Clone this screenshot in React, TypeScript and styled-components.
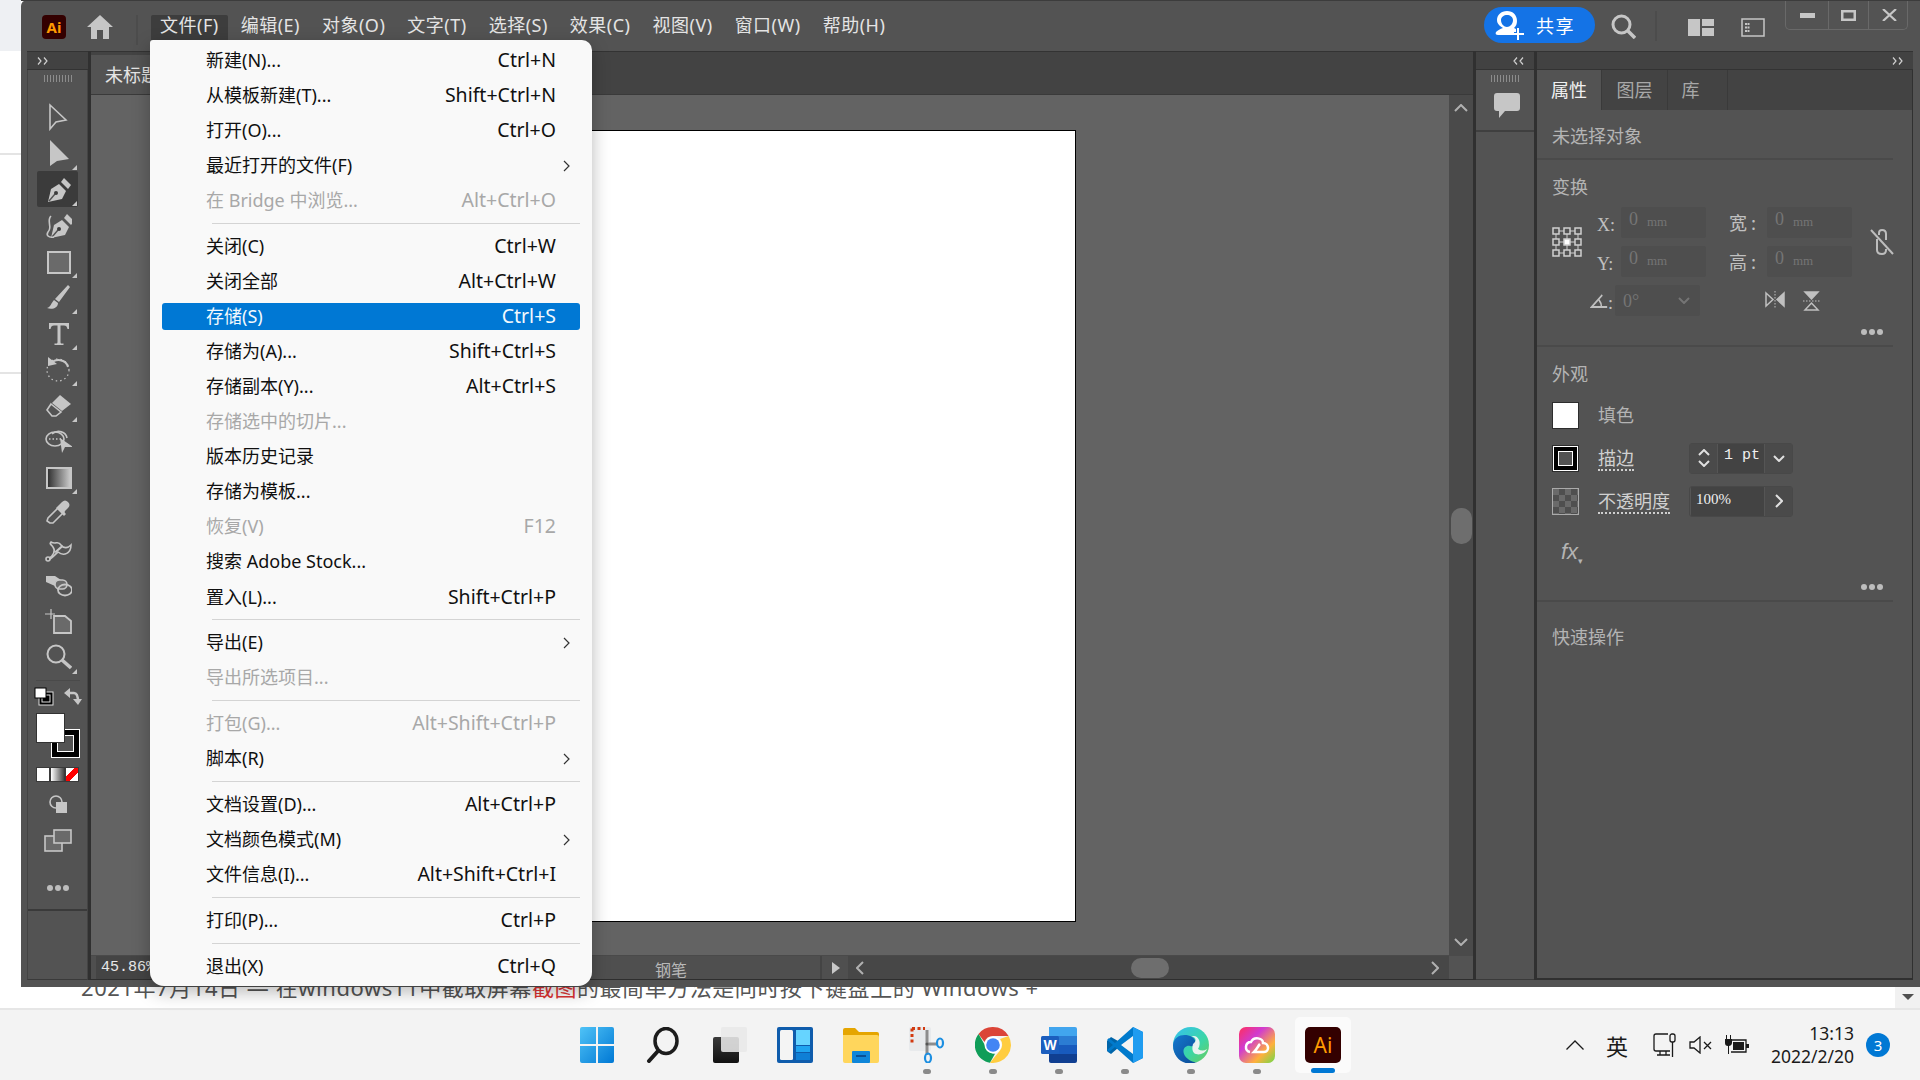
import React from "react";
import styled, { createGlobalStyle } from "styled-components";

const Global = createGlobalStyle`
  html, body { margin: 0; padding: 0; background: #fff; }
  * { box-sizing: border-box; }
`;

const SANS = `"Noto Sans", "Noto Sans CJK SC", sans-serif`;
const CJK = `"Noto Sans CJK SC", "Noto Sans", sans-serif`;
const SERIF = `"Liberation Serif", "Noto Sans CJK SC", serif`;
const ICON = "#c6c6c6";

const Root = styled.div`
  position: relative;
  width: 1920px;
  height: 1080px;
  overflow: hidden;
  display: flex;
  flex-direction: column;
  background: #fff;
  font-family: ${SANS};
`;
const Desktop = styled.div`
  display: flex;
  height: 987px;
`;
const Gutter = styled.div`
  width: 21px;
  display: flex;
  flex-direction: column;
  background: #fff;
`;
const GutterHead = styled.div`
  height: 51px;
  background: #eef0f3;
`;
const GutterRule = styled.div<{ $gap: number }>`
  height: 2px;
  margin-top: ${(p) => p.$gap}px;
  background: #e4e4e4;
`;
const Win = styled.div`
  flex: 1;
  display: flex;
  flex-direction: column;
  background: #535353;
  border-top-left-radius: 6px;
`;
const TitleBar = styled.div`
  height: 51px;
  flex: none;
  display: flex;
  align-items: flex-start;
  padding: 14px 0 0 21px;
  border-top: 1px solid #3c3c3c;
  position: relative;
`;
const Logo = styled.div`
  width: 24px;
  height: 24px;
  border-radius: 4px;
  background: #330000;
  color: #ff9a00;
  font: 700 15px/24px ${SANS};
  text-align: center;
`;
const HomeBtn = styled.div`
  margin-left: 21px;
  width: 26px;
  height: 24px;
`;
const VRule = styled.div<{ $ml: number; $h?: number; $mt?: number }>`
  width: 2px;
  height: ${(p) => p.$h ?? 30}px;
  margin-left: ${(p) => p.$ml}px;
  margin-top: ${(p) => p.$mt ?? 0}px;
  background: #4c4c4c;
`;
const MenuBar = styled.div`
  margin-left: 13px;
  display: flex;
  gap: 4px;
`;
const MenuHead = styled.div<{ $active?: boolean }>`
  height: 25px;
  padding: 0 9px;
  font: 18px/21px ${SANS};
  letter-spacing: 0.5px;
  color: #e4e4e4;
  white-space: nowrap;
  background: ${(p) => (p.$active ? "#3d3d3d" : "transparent")};
  border-radius: 2px 2px 0 0;
`;
const TitleRight = styled.div`
  margin-left: auto;
  display: flex;
  align-items: flex-start;
  margin-top: -14px;
`;
const Share = styled.div`
  margin-top: 6px;
  width: 111px;
  height: 36px;
  border-radius: 18px;
  background: #1473e6;
  color: #fff;
  display: flex;
  align-items: center;
  padding-left: 11px;
  gap: 11px;
  font: 18px/36px ${CJK};
  letter-spacing: 1.5px;
`;
const TopIcon = styled.div<{ $ml: number; $mt: number }>`
  margin-left: ${(p) => p.$ml}px;
  margin-top: ${(p) => p.$mt}px;
  line-height: 0;
`;
const WinControls = styled.div`
  margin-left: 20px;
  margin-right: 12px;
  width: 123px;
  height: 29px;
  display: grid;
  grid-template-columns: 42px 40px 41px;
  border: 1px solid #696969;
  border-top: none;
  border-radius: 0 0 5px 5px;
`;
const WinBtn = styled.div`
  display: flex;
  align-items: center;
  justify-content: center;
  border-left: 1px solid #696969;
  &:first-child { border-left: none; }
`;
const Workspace = styled.div`
  flex: 1;
  min-height: 0;
  display: flex;
  padding: 0 7px 7px 6px;
`;
const ToolCol = styled.div`
  width: 61px;
  flex: none;
  display: flex;
  flex-direction: column;
`;
const Strip = styled.div<{ $align?: string }>`
  height: 19px;
  flex: none;
  background: #424242;
  border-top: 1px solid #333;
  border-bottom: 1px solid #333;
  display: flex;
  align-items: center;
  justify-content: ${(p) => p.$align ?? "flex-start"};
  padding: 0 10px;
  color: #d0d0d0;
  line-height: 0;
`;
const ToolPanel = styled.div`
  flex: 1;
  display: flex;
  flex-direction: column;
  align-items: center;
  border-left: 1px solid #444;
  border-right: 1px solid #444;
  border-bottom: 1px solid #3a3a3a;
`;
const Gripper = styled.div`
  width: 28px;
  height: 7px;
  margin-top: 5px;
  flex: none;
  background: repeating-linear-gradient(90deg, #8c8c8c 0 1px, transparent 1px 3px);
`;
const Tools = styled.div`
  margin-top: 17px;
  display: flex;
  flex-direction: column;
  align-items: center;
`;
const ToolSlot = styled.div<{ $active?: boolean; $corner?: boolean; $mt?: number }>`
  position: relative;
  width: 41px;
  height: 36px;
  flex: none;
  margin-top: ${(p) => p.$mt ?? 0}px;
  display: flex;
  align-items: center;
  justify-content: center;
  border-radius: 2px;
  background: ${(p) => (p.$active ? "#3b3b3b" : "transparent")};
  &::after {
    content: "";
    display: ${(p) => (p.$corner ? "block" : "none")};
    position: absolute;
    right: 1px;
    bottom: 1px;
    border-left: 5px solid transparent;
    border-bottom: 5px solid ${ICON};
  }
`;
const ToolRule = styled.div`
  width: 44px;
  height: 1px;
  background: #4a4a4a;
  margin-top: 5px;
`;
const SwapRow = styled.div`
  width: 48px;
  margin-top: 6px;
  display: flex;
  justify-content: space-between;
  line-height: 0;
`;
const ColorStack = styled.div`
  position: relative;
  width: 44px;
  height: 45px;
  margin-top: 7px;
`;
const FillSwatch = styled.div`
  position: absolute;
  left: 0;
  top: 0;
  width: 29px;
  height: 30px;
  background: #fff;
  border: 1px solid #333;
  z-index: 1;
`;
const StrokeSwatch = styled.div`
  position: absolute;
  right: 0;
  bottom: 0;
  width: 29px;
  height: 29px;
  background: #000;
  border: 1px solid #fff;
  display: flex;
  align-items: center;
  justify-content: center;
  &::after {
    content: "";
    width: 15px;
    height: 15px;
    border: 1px solid #fff;
    background: #535353;
  }
`;
const ModeRow = styled.div`
  margin-top: 9px;
  width: 43px;
  height: 15px;
  display: grid;
  grid-template-columns: repeat(3, 1fr);
  gap: 2px;
  padding: 1px;
  background: #3a3a3a;
`;
const Mode = styled.div<{ $kind: "fill" | "grad" | "none" }>`
  background: ${(p) =>
    p.$kind === "fill"
      ? "#fff"
      : p.$kind === "grad"
      ? "linear-gradient(90deg,#fff,#444)"
      : "linear-gradient(135deg,#fff 0 35%,#f00 35% 65%,#fff 65%)"};
`;
const ToolFoot = styled.div`
  margin-top: auto;
  width: 100%;
  height: 70px;
  border-top: 2px solid #3a3a3a;
`;
const DocArea = styled.div`
  flex: 1;
  min-width: 0;
  display: flex;
  flex-direction: column;
  border-left: 3px solid #303030;
  border-right: 3px solid #303030;
  border-bottom: 1px solid #2e2e2e;
`;
const TabBar = styled.div`
  height: 44px;
  flex: none;
  background: #434343;
  border-top: 1px solid #333;
  border-bottom: 1px solid #3a3a3a;
  display: flex;
`;
const DocTab = styled.div`
  width: 230px;
  margin-top: 3px;
  padding-left: 14px;
  background: #535353;
  color: #e4e4e4;
  font: 18px/38px ${CJK};
`;
const CanvasRow = styled.div`
  flex: 1;
  min-height: 0;
  display: flex;
`;
const Canvas = styled.div`
  flex: 1;
  background: #636363;
  padding: 35px 0 0 425px;
`;
const Artboard = styled.div`
  width: 560px;
  height: 792px;
  background: #fff;
  border: 1px solid #000;
`;
const VScroll = styled.div`
  width: 24px;
  flex: none;
  background: #4a4a4a;
  display: flex;
  flex-direction: column;
  align-items: center;
  justify-content: space-between;
  padding: 9px 0;
  color: #aaa;
`;
const VThumb = styled.div`
  width: 21px;
  height: 36px;
  border-radius: 10px;
  background: #6e6e6e;
  margin-top: 2px;
`;
const StatusRow = styled.div`
  height: 24px;
  flex: none;
  display: flex;
  background: #4f4f4f;
  border-top: 1px solid #4a4a4a;
`;
const ZoomField = styled.div`
  margin-left: 5px;
  width: 120px;
  padding-left: 5px;
  background: #444;
  color: #e8e8e8;
  font: 15px/24px "Liberation Mono", monospace;
  white-space: nowrap;
`;
const ToolName = styled.div`
  margin-left: 439px;
  width: 165px;
  color: #b8b8b8;
  font: 16px/26px ${CJK};
`;
const StatusArrow = styled.div`
  width: 28px;
  border-left: 2px solid #444;
  display: flex;
  align-items: center;
  justify-content: center;
  line-height: 0;
  padding-left: 2px;
`;
const HScroll = styled.div`
  flex: 1;
  display: flex;
  align-items: center;
  padding: 0 10px 0 8px;
  background: #474747;
  color: #aaa;
  line-height: 0;
`;
const HThumb = styled.div`
  width: 38px;
  height: 20px;
  border-radius: 10px;
  background: #6e6e6e;
  margin-left: 267px;
  margin-right: auto;
`;
const ScrollCorner = styled.div`
  width: 24px;
  flex: none;
  background: #535353;
`;
const CommentCol = styled.div`
  width: 58px;
  flex: none;
  display: flex;
  flex-direction: column;
  border-bottom: 1px solid #3a3a3a;
`;
const CommentBox = styled.div`
  height: 62px;
  flex: none;
  display: flex;
  flex-direction: column;
  align-items: center;
  border-bottom: 2px solid #3f3f3f;
`;
const BubbleWrap = styled.div`
  margin: 11px 0 0 3px;
  line-height: 0;
`;
const PropsCol = styled.div`
  width: 379px;
  flex: none;
  display: flex;
  flex-direction: column;
  border-left: 3px solid #303030;
`;
const PropsBody = styled.div`
  flex: 1;
  display: flex;
  flex-direction: column;
  border-right: 1px solid #303030;
  border-bottom: 2px solid #303030;
  color: #b4b4b4;
  font: 18px/24px ${CJK};
`;
const PropTabs = styled.div`
  height: 40px;
  flex: none;
  display: flex;
  background: #434343;
`;
const PropTab = styled.div<{ $active?: boolean; $w: number; $pr?: number }>`
  width: ${(p) => p.$w}px;
  padding-right: ${(p) => p.$pr ?? 0}px;
  text-align: center;
  font: 18px/38px ${CJK};
  color: ${(p) => (p.$active ? "#f0f0f0" : "#a8a8a8")};
  background: ${(p) => (p.$active ? "#535353" : "transparent")};
  border-right: 1px solid #3a3a3a;
`;
const NoSel = styled.div<{ $quick?: boolean }>`
  height: 50px;
  flex: none;
  margin-right: 19px;
  padding: ${(p) => (p.$quick ? 22 : 13)}px 0 0 15px;
  border-bottom: ${(p) => (p.$quick ? "none" : "2px solid #4a4a4a")};
`;
const Section = styled.div<{ $h: number }>`
  height: ${(p) => p.$h}px;
  flex: none;
  margin-right: 19px;
  padding: 14px 0 0 15px;
  border-bottom: 2px solid #4a4a4a;
`;
const TransformGrid = styled.div`
  margin-top: 9px;
  display: grid;
  grid-template-columns: 45px 24px 85px 23px 38px 85px 18px 24px;
  grid-auto-rows: 31px;
  row-gap: 8px;
  align-items: center;
`;
const RefCell = styled.div`
  grid-column: 1;
  grid-row: 1 / span 2;
  line-height: 0;
`;
const FieldLabel = styled.div<{ $serif?: boolean; $c?: number; $r?: number }>`
  ${(p) => (p.$c ? `grid-column: ${p.$c}; grid-row: ${p.$r};` : "")}
  font: 18px/31px ${(p) => (p.$serif ? SERIF : CJK)};
  padding-top: ${(p) => (p.$serif ? 3 : 0)}px;
  height: 31px;
  color: #c0c0c0;
  white-space: nowrap;
`;
const MutedField = styled.div<{ $w?: number; $c?: number; $r?: number }>`
  ${(p) => (p.$c ? `grid-column: ${p.$c}; grid-row: ${p.$r};` : "")}
  width: ${(p) => p.$w ?? 85}px;
  height: 31px;
  border-radius: 2px;
  background: #4e4e4e;
  color: #757575;
  font: 18px/24px ${SERIF};
  padding-left: 8px;
  display: flex;
  gap: 9px;
  span { font-size: 13px; line-height: 29px; }
`;
const LinkCell = styled.div`
  grid-column: 8;
  grid-row: 1 / span 2;
  line-height: 0;
`;
const AngleRow = styled.div`
  grid-column: 1 / -1;
  grid-row: 3;
  display: flex;
  align-items: center;
  padding-left: 38px;
`;
const AngleField = styled(MutedField)`
  margin-left: 2px;
  position: relative;
  justify-content: space-between;
  padding-right: 10px;
  align-items: center;
`;
const FlipIcons = styled.div`
  margin-left: 65px;
  display: flex;
  gap: 18px;
  line-height: 0;
`;
const DotsRow = styled.div<{ $mt: number; $center?: boolean }>`
  margin-top: ${(p) => p.$mt}px;
  display: flex;
  justify-content: ${(p) => (p.$center ? "center" : "flex-end")};
  padding-right: ${(p) => (p.$center ? 0 : 10)}px;
  gap: 2px;
`;
const Dot = styled.i`
  display: block;
  width: 6px;
  height: 6px;
  border-radius: 50%;
  background: #bdbdbd;
`;
const ApRow = styled.div<{ $mt?: number }>`
  height: 36px;
  margin-top: ${(p) => p.$mt ?? 7}px;
  display: grid;
  grid-template-columns: 27px 110px auto;
  column-gap: 0;
  align-items: center;
`;
const ApSwatch = styled.div<{ $kind: "fill" | "stroke" | "opacity" }>`
  width: 27px;
  height: 27px;
  border: 1px solid ${(p) => (p.$kind === "opacity" ? "#aaa" : "#2d2d2d")};
  background: ${(p) =>
    p.$kind === "fill"
      ? "#fff"
      : p.$kind === "stroke"
      ? "#000"
      : "repeating-conic-gradient(#4f4f4f 0 25%, #6a6a6a 0 50%) 0 0 / 12px 12px"};
  display: flex;
  align-items: center;
  justify-content: center;
  ${(p) => (p.$kind === "stroke" ? "outline: 1px solid #fff; outline-offset: -2px;" : "")}
  &::after {
    content: "";
    display: ${(p) => (p.$kind === "stroke" ? "block" : "none")};
    width: 13px;
    height: 13px;
    border: 1px solid #fff;
    background: #535353;
  }
`;
const ApLabel = styled.div<{ $link?: boolean }>`
  margin-left: 19px;
  width: fit-content;
  height: 26px;
  color: ${(p) => (p.$link ? "#d0d0d0" : "#b4b4b4")};
  border-bottom: ${(p) => (p.$link ? "2px dotted #cfcfcf" : "none")};
`;
const ValueBox = styled.div`
  width: 104px;
  height: 31px;
  display: flex;
  border: 1px solid #484848;
  border-radius: 3px;
  overflow: hidden;
`;
const BoxBtn = styled.div<{ $w: number }>`
  width: ${(p) => p.$w}px;
  flex: none;
  display: flex;
  flex-direction: column;
  align-items: center;
  justify-content: center;
  gap: 4px;
  line-height: 0;
  background: #4a4a4a;
`;
const BoxValue = styled.div<{ $mono?: boolean }>`
  flex: 1;
  background: #434343;
  color: #f0f0f0;
  padding-left: ${(p) => (p.$mono ? 6 : 5)}px;
  font: 15px/24px ${(p) => (p.$mono ? `"Liberation Mono", monospace` : SERIF)};
  border-left: 1px solid #555;
  border-right: 1px solid #555;
  white-space: pre;
`;
const FxRow = styled.div`
  margin: 18px 0 0 9px;
  height: 30px;
  color: #b4b4b4;
  font: italic 22px/30px "Liberation Sans", sans-serif;
  sub { font-size: 9px; font-style: normal; }
`;
const BelowRow = styled.div`
  height: 21px;
  flex: none;
  display: flex;
  overflow: hidden;
`;
const Article = styled.div`
  margin: -12px 0 0 81px;
  height: 24px;
  flex: 1;
  font: 22px/24px ${SANS};
  letter-spacing: 0.55px;
  color: #555;
  white-space: nowrap;
  em { color: #dd3333; font-style: normal; }
`;
const PageScroll = styled.div`
  width: 25px;
  flex: none;
  background: #f1f1f1;
  display: flex;
  justify-content: center;
  padding-top: 7px;
  &::after {
    content: "";
    width: 0;
    height: 0;
    border-left: 6px solid transparent;
    border-right: 6px solid transparent;
    border-top: 6px solid #505050;
  }
`;
const Taskbar = styled.div`
  height: 72px;
  flex: none;
  background: #f3f3f3;
  border-top: 2px solid #e6e6e6;
  display: flex;
  padding-left: 564px;
  position: relative;
`;
const TaskCell = styled.div<{ $active?: boolean }>`
  position: relative;
  width: 66px;
  height: 70px;
  flex: none;
  display: flex;
  justify-content: center;
  padding-top: 17px;
  line-height: 0;
  &::before {
    content: "";
    display: ${(p) => (p.$active ? "block" : "none")};
    position: absolute;
    left: 5px;
    right: 5px;
    top: 7px;
    bottom: 7px;
    background: #fbfbfb;
    border-radius: 5px;
  }
  svg { position: relative; }
`;
const RunDot = styled.i<{ $active?: boolean }>`
  position: absolute;
  left: 50%;
  transform: translateX(-50%);
  bottom: ${(p) => (p.$active ? 7 : 6)}px;
  width: ${(p) => (p.$active ? 24 : 8)}px;
  height: 5px;
  border-radius: 3px;
  background: ${(p) => (p.$active ? "#0078d4" : "#8a8a8a")};
`;
const Tray = styled.div`
  margin-left: auto;
  padding-right: 30px;
  display: flex;
  align-items: center;
  color: #1a1a1a;
  height: 70px;
`;
const TrayIcon = styled.div<{ $ml: number }>`
  margin-left: ${(p) => p.$ml}px;
  line-height: 0;
`;
const Lang = styled.div`
  margin-left: 22px;
  font: 22px/1 ${CJK};
`;
const Clock = styled.div`
  width: 105px;
  text-align: right;
  font: 17.5px/23px "Noto Sans", sans-serif;
`;
const Badge = styled.div`
  margin-left: 12px;
  width: 24px;
  height: 24px;
  border-radius: 50%;
  background: #0078d4;
  color: #fff;
  text-align: center;
  font: 15px/24px "Noto Sans", sans-serif;
`;
const Menu = styled.div`
  position: absolute;
  left: 150px;
  top: 40px;
  width: 442px;
  height: 946px;
  padding-top: 2.5px;
  background: #f9f9f9;
  border-radius: 3px 10px 14px 14px;
  box-shadow: 0 6px 18px rgba(0, 0, 0, 0.28);
  z-index: 5;
`;
const Row = styled.div<{ $sel?: boolean; $off?: boolean }>`
  height: 35.05px;
  position: relative;
  display: flex;
  align-items: center;
  justify-content: space-between;
  padding: 0 36px 0 56px;
  font: 18px/26px ${SANS};
  white-space: nowrap;
  color: ${(p) => (p.$sel ? "#f2f8fd" : p.$off ? "#a8a8a8" : "#101010")};
  &::before {
    content: "";
    display: ${(p) => (p.$sel ? "block" : "none")};
    position: absolute;
    left: 12px;
    right: 12px;
    top: 4px;
    bottom: 4px;
    background: #0078d4;
    border-radius: 3px;
  }
  span { position: relative; }
`;
const Shortcut = styled.span`
  font-size: 19.5px;
`;
const RowArrow = styled.svg`
  position: absolute;
  right: 22px;
  top: 12px;
`;
const Sep = styled.div`
  height: 10.8px;
  display: flex;
  align-items: center;
  padding: 0 12px 0 62px;
  &::after {
    content: "";
    flex: 1;
    height: 1px;
    background: #d4d4d4;
  }
`;

type Item = { l: string; s?: string; off?: boolean; sel?: boolean; arrow?: boolean } | "sep";
const ITEMS: Item[] = [
  { l: "新建(N)...", s: "Ctrl+N" },
  { l: "从模板新建(T)...", s: "Shift+Ctrl+N" },
  { l: "打开(O)...", s: "Ctrl+O" },
  { l: "最近打开的文件(F)", arrow: true },
  { l: "在 Bridge 中浏览...", s: "Alt+Ctrl+O", off: true },
  "sep",
  { l: "关闭(C)", s: "Ctrl+W" },
  { l: "关闭全部", s: "Alt+Ctrl+W" },
  { l: "存储(S)", s: "Ctrl+S", sel: true },
  { l: "存储为(A)...", s: "Shift+Ctrl+S" },
  { l: "存储副本(Y)...", s: "Alt+Ctrl+S" },
  { l: "存储选中的切片...", off: true },
  { l: "版本历史记录" },
  { l: "存储为模板..." },
  { l: "恢复(V)", s: "F12", off: true },
  { l: "搜索 Adobe Stock..." },
  { l: "置入(L)...", s: "Shift+Ctrl+P" },
  "sep",
  { l: "导出(E)", arrow: true },
  { l: "导出所选项目...", off: true },
  "sep",
  { l: "打包(G)...", s: "Alt+Shift+Ctrl+P", off: true },
  { l: "脚本(R)", arrow: true },
  "sep",
  { l: "文档设置(D)...", s: "Alt+Ctrl+P" },
  { l: "文档颜色模式(M)", arrow: true },
  { l: "文件信息(I)...", s: "Alt+Shift+Ctrl+I" },
  "sep",
  { l: "打印(P)...", s: "Ctrl+P" },
  "sep",
  { l: "退出(X)", s: "Ctrl+Q" },
];
const HEADS = ["文件(F)", "编辑(E)", "对象(O)", "文字(T)", "选择(S)", "效果(C)", "视图(V)", "窗口(W)", "帮助(H)"];

const Ic = ({ s = 28, h, children, vb }: { s?: number; h?: number; vb?: string; children: React.ReactNode }) => (
  <svg width={s} height={h ?? s} viewBox={vb ?? `0 0 ${s} ${h ?? s}`} fill="none" stroke={ICON} strokeWidth="1.6">
    {children}
  </svg>
);
const PenNib = () => (
  <g>
    <path fill={ICON} stroke="none" d="M15 9 22 16 18 24 4 27 7 14Z" />
    <path stroke="#535353" strokeWidth="1.4" d="M5 26 11 19" />
    <circle cx="12" cy="18" r="2" fill="#3b3b3b" stroke="none" />
    <path fill={ICON} stroke="none" d="M17 7 20 3 27 10 24 14Z" />
  </g>
);
const Collapse = ({ left }: { left?: boolean }) => (
  <svg width="11" height="8" viewBox="0 0 11 8" fill="none" stroke="#d0d0d0" strokeWidth="1.2">
    <path d={left ? "M4 0.500 1 4 4 7.500M10 0.500 7 4 10 7.500" : "M1 0.500 4 4 1 7.500M7 0.500 10 4 7 7.500"} />
  </svg>
);
const TOOLS: { node: React.ReactNode; corner?: boolean; active?: boolean }[] = [
  { node: <Ic><path d="M6 2V26L12 19 22 17Z" /></Ic> },
  { node: <Ic><path fill={ICON} stroke="none" d="M6 1V27L13 22 25 20Z" /></Ic>, corner: true },
  { node: <Ic><PenNib /></Ic>, corner: true, active: true },
  { node: <Ic><g transform="translate(3 0)"><PenNib /></g><path d="M7 5C2 10 9 16 4 21 2 24 4 27 10 26" /></Ic> },
  { node: <Ic><rect x="4" y="5" width="22" height="21" fill="#6a6a6a" strokeWidth="2" /></Ic>, corner: true },
  { node: <Ic><path fill={ICON} stroke="none" d="M24 2 26 4 15 19 11 16ZM10 17 14 20C14 25 8 27 3 25 7 24 7 20 10 17Z" /></Ic>, corner: true },
  { node: <Ic><path fill={ICON} stroke="none" d="M5 4H25V10H23.500C23 7.500 22 6.500 20 6.500H16.500V23C16.500 24 17 24.500 18 24.500H19.500V26H10.500V24.500H12C13 24.500 13.500 24 13.500 23V6.500H10C8 6.500 7 7.500 6.500 10H5Z" /></Ic>, corner: true },
  { node: <Ic><path d="M7 9C11 3 22 4 24 12" strokeWidth="2" /><path fill={ICON} stroke="none" d="M4 2 13 9 4 11Z" /><circle cx="14" cy="15" r="11" strokeDasharray="1.500 3" strokeWidth="1.200" /></Ic>, corner: true },
  { node: <Ic><path fill={ICON} stroke="none" d="M16 4 27 13 18 20 8 12Z" /><path d="M7 13 17 21 12 25 8 25 3 19Z" strokeWidth="1.600" /></Ic>, corner: true },
  { node: <Ic><ellipse cx="11" cy="12" rx="9" ry="7" /><path strokeDasharray="1.500 2" d="M5 12H18" /><path fill={ICON} stroke="none" d="M16 11 29 20H21L18 26Z" /><path d="M8 7C14 2 22 5 23 11" /></Ic> },
  { node: <Ic><rect x="3" y="5" width="24" height="20" fill="url(#g1)" strokeWidth="2" /></Ic>, corner: true },
  { node: <Ic><path d="M6 24 3 22 4 19 15 8 20 13 9 24Z" /><path fill={ICON} stroke="none" d="M14 7 18 3C20 1 22 1 24 3 26 5 26 7 24 9L20 13 22 15 20 17 12 9Z" /></Ic> },
  { node: <Ic><circle cx="4" cy="24" r="2" /><path d="M5 23C9 21 12 16 9 12 7 9 5 9 7 7 12 10 14 5 17 10 20 14 24 13 27 10 27 18 20 22 14 17 10 20 8 24 5 24" /><path fill={ICON} stroke="none" d="M10 17 18 10 19 12 12 18Z" /></Ic> },
  { node: <Ic><path fill={ICON} stroke="none" d="M2 5H11L17 9C13 10 11 12 11 15L2 11Z" /><rect x="11" y="9" width="12" height="9" rx="4.500" fill="#6a6a6a" /><ellipse cx="21" cy="19" rx="7" ry="5.500" strokeWidth="1.800" /></Ic> },
  { node: <Ic><path d="M7 2V12M1 7H11" strokeWidth="1.200" /><path fill="#6a6a6a" strokeWidth="1.800" d="M10 9H21L27 14V26H10Z" /></Ic> },
  { node: <Ic><circle cx="12" cy="11" r="8.500" strokeWidth="2" /><path d="M18 17 27 25" strokeWidth="3.500" /></Ic>, corner: true },
];

const Chev = ({ d, w = 14, h = 8, stroke = "#b0b0b0", sw = 2 }: { d: string; w?: number; h?: number; stroke?: string; sw?: number }) => (
  <svg width={w} height={h} viewBox={`0 0 ${w} ${h}`} fill="none" stroke={stroke} strokeWidth={sw}>
    <path d={d} />
  </svg>
);

const TaskIcons: React.ReactNode[] = [
  <svg width="36" height="36" viewBox="0 0 36 36" key="w">
    <defs>
      <linearGradient id="wg" x1="0" y1="0" x2="1" y2="1"><stop offset="0" stopColor="#4fc3f7" /><stop offset="1" stopColor="#0078d4" /></linearGradient>
    </defs>
    <path fill="url(#wg)" d="M1 2a2 2 0 0 1 2-2H17V17H1ZM19 0H33a2 2 0 0 1 2 2V17H19ZM1 19H17V36H3a2 2 0 0 1-2-2ZM19 19H35V34a2 2 0 0 1-2 2H19Z" />
  </svg>,
  <svg width="36" height="36" viewBox="0 0 36 36" fill="none" stroke="#1c1c1c" key="s">
    <ellipse cx="21" cy="14" rx="11" ry="12.500" strokeWidth="3.500" />
    <path d="M13 24 4 34" strokeWidth="4" strokeLinecap="round" />
  </svg>,
  <svg width="36" height="36" viewBox="0 0 36 36" key="t">
    <defs>
      <linearGradient id="tg" x1="0" y1="0" x2="0" y2="1"><stop offset="0" stopColor="#3a3a3a" /><stop offset="1" stopColor="#111" /></linearGradient>
    </defs>
    <rect x="2" y="10" width="26" height="26" rx="2" fill="url(#tg)" />
    <rect x="10" y="0" width="26" height="25" rx="2" fill="#e8e8e8" opacity=".88" />
  </svg>,
  <svg width="36" height="36" viewBox="0 0 36 36" key="d">
    <rect width="36" height="36" rx="2" fill="#0f5cac" />
    <rect x="3" y="3" width="13" height="30" rx="1.500" fill="#f4f4f4" />
    <rect x="19" y="3" width="14" height="15" fill="#66d4ff" />
    <rect x="19" y="19" width="14" height="6" fill="#1fa4f0" />
    <rect x="19" y="26" width="14" height="7" fill="#0f7fd6" />
  </svg>,
  <svg width="36" height="36" viewBox="0 0 36 36" key="f">
    <path fill="#e5a500" d="M0 3a2 2 0 0 1 2-2H12L16 5H34a2 2 0 0 1 2 2V12H0Z" />
    <path fill="#ffd65c" d="M0 8H34a2 2 0 0 1 2 2V34a2 2 0 0 1-2 2H2a2 2 0 0 1-2-2Z" />
    <rect x="9" y="24" width="18" height="12" rx="1" fill="#0f86d9" />
    <rect x="13" y="28" width="10" height="2" fill="#0a4f94" />
  </svg>,
  <svg width="36" height="36" viewBox="0 0 36 36" fill="none" key="c">
    <rect x="0" y="0" width="22" height="24" rx="2" fill="#e8eaec" />
    <path stroke="#d23a10" strokeWidth="3" strokeDasharray="3 2.500" d="M3 1.500H16M3 1.500V17" />
    <path stroke="#8d8d8d" strokeWidth="3" d="M18 3V28M18 17H28" />
    <circle cx="18" cy="17" r="1.500" fill="#555" />
    <ellipse cx="31" cy="16" rx="3" ry="4.500" stroke="#1d8fe1" strokeWidth="2.200" />
    <ellipse cx="19" cy="31" rx="3" ry="4.500" stroke="#1d8fe1" strokeWidth="2.200" />
  </svg>,
  <svg width="36" height="36" viewBox="0 0 36 36" key="g">
    <path fill="#db4437" d="M18 0A18 18 0 0 1 33.600 9H18A9 9 0 0 0 9.500 15L3.500 7A18 18 0 0 1 18 0Z" />
    <path fill="#0f9d58" d="M3.500 7 11 20A9 9 0 0 0 20 26.800L15 35.700A18 18 0 0 1 3.500 7Z" />
    <path fill="#ffcd40" d="M33.600 9A18 18 0 0 1 15 35.700L24.800 23.800A9 9 0 0 0 25 12Z" />
    <circle cx="18" cy="18" r="8.500" fill="#fff" />
    <circle cx="18" cy="18" r="6.800" fill="#4285f4" />
  </svg>,
  <svg width="36" height="36" viewBox="0 0 36 36" key="wd">
    <path fill="#41a5ee" d="M8 0H34a2 2 0 0 1 2 2V9H8Z" />
    <rect x="8" y="9" width="28" height="9" fill="#2b7cd3" />
    <rect x="8" y="18" width="28" height="9" fill="#185abd" />
    <path fill="#103f91" d="M8 27H36V34a2 2 0 0 1-2 2H10a2 2 0 0 1-2-2Z" />
    <rect x="0" y="9" width="18" height="18" rx="1.500" fill="#1b5ebe" />
    <text x="9" y="23" textAnchor="middle" fill="#fff" fontSize="14" fontWeight="700" fontFamily="Liberation Sans, sans-serif">W</text>
  </svg>,
  <svg width="36" height="36" viewBox="0 0 36 36" key="v">
    <path fill="#0065a9" d="M1 13 4 10 11 14 9 19 1 25 0 24V14Z M9 16 11 21 4 27 1 25Z" />
    <path fill="#007acc" d="M26 0 36 5V31L26 36 8 20 2 25 0 23 6 18 0 13 2 11 8 16Z M26 9 14 18 26 27Z" />
    <path fill="#1f9cf0" d="M26 0 36 5V31L26 36Z" />
  </svg>,
  <svg width="36" height="36" viewBox="0 0 36 36" key="e">
    <defs>
      <linearGradient id="eg1" x1="0" y1="0" x2="1" y2="1"><stop offset="0" stopColor="#35c1f1" /><stop offset=".6" stopColor="#3bd6a5" /><stop offset="1" stopColor="#6ecb5a" /></linearGradient>
      <linearGradient id="eg2" x1="0" y1="0" x2="1" y2="1"><stop offset="0" stopColor="#1479cf" /><stop offset="1" stopColor="#0c4a94" /></linearGradient>
    </defs>
    <circle cx="18" cy="18" r="18" fill="url(#eg1)" />
    <path fill="url(#eg2)" d="M0 18C1 8 12 6 19 10 25 14 23 21 17 19 13 18 9 22 11 27 13 32 20 36 24 35 12 40 0 32 0 18Z" />
    <path fill="#f3f3f3" d="M20 17C25 14 22 9 18 10 23 6 30 14 25 22 28 24 31 24 34 22 32 27 25 29 21 26 19 24 19 20 20 17Z" opacity=".95" />
  </svg>,
  <svg width="36" height="36" viewBox="0 0 36 36" fill="none" key="cc">
    <defs>
      <linearGradient id="ccg" x1="0" y1="0" x2="1" y2="1"><stop offset="0" stopColor="#ff2f5e" /><stop offset=".35" stopColor="#d03bd0" /><stop offset=".7" stopColor="#ffb03c" /><stop offset="1" stopColor="#6ed94a" /></linearGradient>
    </defs>
    <rect width="36" height="36" rx="7" fill="url(#ccg)" />
    <path stroke="#fff" strokeWidth="2.500" d="M11 25C5 24 6 15 12 15 15 9 24 11 24 16 30 16 31 25 25 25H15C18 22 19 19 21 17" />
  </svg>,
  <svg width="36" height="36" viewBox="0 0 36 36" key="ai">
    <rect width="36" height="36" rx="5" fill="#330000" />
    <text x="18" y="26" textAnchor="middle" fill="#ff9a00" fontSize="21" fontFamily="Noto Sans, sans-serif">Ai</text>
  </svg>,
];

export default function App() {
  return (
    <Root>
      <Global />
      <svg width="0" height="0" style={{ position: "absolute" }}>
        <defs>
          <linearGradient id="g1"><stop offset="0" stopColor="#2c2c2c" /><stop offset="1" stopColor="#cfcfcf" /></linearGradient>
        </defs>
      </svg>
      <Desktop>
        <Gutter>
          <GutterHead />
          <GutterRule $gap={102} />
          <GutterRule $gap={217} />
        </Gutter>
        <Win>
          <TitleBar>
            <Logo>Ai</Logo>
            <HomeBtn>
              <svg width="26" height="24" viewBox="0 0 26 24" fill={ICON}>
                <path d="M13 0 26 12H22V24H16V15H10V24H4V12H0Z" />
              </svg>
            </HomeBtn>
            <VRule $ml={23} />
            <MenuBar>
              {HEADS.map((h, i) => (
                <MenuHead key={h} $active={i === 0}>{h}</MenuHead>
              ))}
            </MenuBar>
            <TitleRight>
              <Share>
                <svg width="30" height="30" viewBox="0 0 30 30" fill="none">
                  <path fill="#fff" fillRule="evenodd" d="M12 1C18 1 22 5 22 11 22 14 21 16 19 18L21 19V22H19V25H3C1 25 0 24 1 22 3 20 5 19 8 18 5 16 2 14 2 10 2 5 6 1 12 1ZM12 5C9 5 6 7 6 10 6 14 9 17 12 17 15 17 18 14 18 10 18 7 15 5 12 5Z" />
                  <path stroke="#fff" strokeWidth="2" d="M23 18V30M17 24H29" />
                </svg>
                共享
              </Share>
              <TopIcon $ml={16} $mt={13}>
                <svg width="25" height="25" viewBox="0 0 25 25" fill="none" stroke={ICON}>
                  <circle cx="10.500" cy="10.500" r="8.500" strokeWidth="3" />
                  <path d="M16.500 16.500 24 24" strokeWidth="3.500" />
                </svg>
              </TopIcon>
              <VRule $ml={19} $h={30} $mt={10} />
              <TopIcon $ml={31} $mt={18}>
                <svg width="26" height="17" viewBox="0 0 26 17" fill={ICON}>
                  <path d="M0 0H12V17H0ZM14 0H26V7H14ZM14 9H26V17H14Z" />
                </svg>
              </TopIcon>
              <TopIcon $ml={27} $mt={17}>
                <svg width="24" height="19" viewBox="0 0 24 19" fill="none" stroke={ICON}>
                  <rect x="1" y="1" width="22" height="17" strokeWidth="1.500" />
                  <path d="M5 5V14M7.500 5V14" strokeWidth="2" strokeDasharray="2 1.500" />
                </svg>
              </TopIcon>
              <WinControls>
                <WinBtn><svg width="15" height="5"><rect width="15" height="5" fill={ICON} /></svg></WinBtn>
                <WinBtn><svg width="15" height="11" fill="none" stroke={ICON} strokeWidth="2.500"><rect x="1.250" y="1.250" width="12.500" height="8.500" /></svg></WinBtn>
                <WinBtn><svg width="15" height="12" fill="none" stroke={ICON} strokeWidth="2.200"><path d="M1 0 14 12M14 0 1 12" /></svg></WinBtn>
              </WinControls>
            </TitleRight>
          </TitleBar>
          <Workspace>
            <ToolCol>
              <Strip><Collapse /></Strip>
              <ToolPanel>
                <Gripper />
                <Tools>
                  {TOOLS.map((t, i) => (
                    <ToolSlot key={i} $active={t.active} $corner={t.corner}>{t.node}</ToolSlot>
                  ))}
                </Tools>
                <ToolRule />
                <SwapRow>
                  <svg width="20" height="19" viewBox="0 0 20 19">
                    <rect x="5" y="5" width="14" height="13" fill="#000" stroke="#ddd" />
                    <rect x="8" y="8" width="8" height="7" fill="none" stroke="#ddd" />
                    <rect x="1" y="1" width="11" height="10" fill="#fff" stroke="#000" />
                  </svg>
                  <svg width="18" height="18" viewBox="0 0 18 18" fill="none" stroke={ICON} strokeWidth="2.500">
                    <path d="M3 6H10C13 6 14 9 14 15" />
                    <path fill={ICON} stroke="none" d="M6 1V11L0 6ZM9 12H18L14 18Z" />
                  </svg>
                </SwapRow>
                <ColorStack>
                  <FillSwatch />
                  <StrokeSwatch />
                </ColorStack>
                <ModeRow>
                  <Mode $kind="fill" />
                  <Mode $kind="grad" />
                  <Mode $kind="none" />
                </ModeRow>
                <ToolSlot $mt={5}>
                  <Ic s={20}><circle cx="8" cy="7" r="6" /><rect x="8" y="7" width="11" height="11" fill={ICON} stroke="none" /></Ic>
                </ToolSlot>
                <ToolSlot>
                  <Ic s={28}><rect x="1" y="9" width="17" height="15" fill="#6a6a6a" /><rect x="10" y="3" width="17" height="13" fill="#6a6a6a" /></Ic>
                </ToolSlot>
                <DotsRow $mt={26} $center>
                  <Dot /><Dot /><Dot />
                </DotsRow>
                <ToolFoot />
              </ToolPanel>
            </ToolCol>
            <DocArea>
              <TabBar><DocTab>未标题-1</DocTab></TabBar>
              <CanvasRow>
                <Canvas><Artboard /></Canvas>
                <VScroll>
                  <Chev d="M1 7 7 1 13 7" />
                  <VThumb />
                  <Chev d="M1 1 7 7 13 1" />
                </VScroll>
              </CanvasRow>
              <StatusRow>
                <ZoomField>45.86%</ZoomField>
                <ToolName>钢笔</ToolName>
                <StatusArrow>
                  <svg width="8" height="12"><path d="M0 0 8 6 0 12Z" fill="#c8c8c8" /></svg>
                </StatusArrow>
                <HScroll>
                  <Chev d="M7 1 1 7 7 13" w={8} h={14} />
                  <HThumb />
                  <Chev d="M1 1 7 7 1 13" w={8} h={14} />
                </HScroll>
                <ScrollCorner />
              </StatusRow>
            </DocArea>
            <CommentCol>
              <Strip $align="flex-end"><Collapse left /></Strip>
              <CommentBox>
                <Gripper />
                <BubbleWrap>
                  <svg width="26" height="25" viewBox="0 0 26 25" fill={ICON}>
                    <path d="M3 0H23a3 3 0 0 1 3 3V15a3 3 0 0 1-3 3H11L5 25V18H3a3 3 0 0 1-3-3V3a3 3 0 0 1 3-3Z" />
                  </svg>
                </BubbleWrap>
              </CommentBox>
            </CommentCol>
            <PropsCol>
              <Strip $align="flex-end"><Collapse /></Strip>
              <PropsBody>
                <PropTabs>
                  <PropTab $active $w={65}>属性</PropTab>
                  <PropTab $w={66}>图层</PropTab>
                  <PropTab $w={60} $pr={14}>库</PropTab>
                </PropTabs>
                <NoSel>未选择对象</NoSel>
                <Section $h={187}>
                  变换
                  <TransformGrid>
                    <RefCell>
                      <svg width="30" height="30" viewBox="0 0 30 30" fill="none" stroke="#d0d0d0" strokeWidth="1.500">
                        <path d="M7 4H23M7 15H23M7 26H23M4 7V23M15 7V23M26 7V23" strokeWidth="1" />
                        {[0, 11, 22].flatMap((y) =>
                          [0, 11, 22].map((x) => (
                            <rect key={`${x}-${y}`} x={x + 1} y={y + 1} width="6" height="6" fill={x === 11 && y === 11 ? "#fff" : "#535353"} />
                          ))
                        )}
                      </svg>
                    </RefCell>
                    <FieldLabel $serif $c={2} $r={1}>X:</FieldLabel>
                    <MutedField $c={3} $r={1}>0<span>mm</span></MutedField>
                    <FieldLabel $c={5} $r={1}>宽 :</FieldLabel>
                    <MutedField $c={6} $r={1}>0<span>mm</span></MutedField>
                    <FieldLabel $serif $c={2} $r={2}>Y:</FieldLabel>
                    <MutedField $c={3} $r={2}>0<span>mm</span></MutedField>
                    <FieldLabel $c={5} $r={2}>高 :</FieldLabel>
                    <MutedField $c={6} $r={2}>0<span>mm</span></MutedField>
                    <LinkCell>
                      <svg width="24" height="26" viewBox="0 0 24 26" fill="none" stroke="#bdbdbd" strokeWidth="2">
                        <path d="M1 1 23 25" />
                        <path d="M9 6V4C9 2 10 1 12 1 15 1 16 3 16 5V11M16 20V21C16 24 14 25 12 25 9 25 7 24 7 21V10" />
                      </svg>
                    </LinkCell>
                    <AngleRow>
                      <svg width="18" height="14" viewBox="0 0 22 14" fill="none" stroke="#c0c0c0" strokeWidth="1.800" preserveAspectRatio="none">
                        <path d="M15 1 2 13H21M11 6C13 8 14 10 14 13" />
                      </svg>
                      <FieldLabel $serif>:</FieldLabel>
                      <AngleField $w={85}>
                        <div>0°</div>
                        <Chev d="M1 1 6 6 11 1" w={12} h={7} stroke="#757575" />
                      </AngleField>
                      <FlipIcons>
                        <svg width="20" height="17" viewBox="0 0 20 17" fill="none" stroke="#c0c0c0" strokeWidth="1.500">
                          <path d="M1 2 8 8.500 1 15Z" />
                          <path d="M19 2 12 8.500 19 15Z" fill="#c0c0c0" />
                          <path d="M10 0V17" strokeDasharray="1.500 1.500" strokeWidth="1" />
                        </svg>
                        <svg width="17" height="20" viewBox="0 0 17 20" fill="none" stroke="#c0c0c0" strokeWidth="1.500">
                          <path d="M2 1 8.500 8 15 1Z" fill="#c0c0c0" />
                          <path d="M2 19 8.500 12 15 19Z" />
                          <path d="M0 10H17" strokeDasharray="1.500 1.500" strokeWidth="1" />
                        </svg>
                      </FlipIcons>
                    </AngleRow>
                  </TransformGrid>
                  <DotsRow $mt={13}><Dot /><Dot /><Dot /></DotsRow>
                </Section>
                <Section $h={255}>
                  外观
                  <ApRow $mt={12}>
                    <ApSwatch $kind="fill" />
                    <ApLabel>填色</ApLabel>
                  </ApRow>
                  <ApRow>
                    <ApSwatch $kind="stroke" />
                    <ApLabel $link>描边</ApLabel>
                    <ValueBox>
                      <BoxBtn $w={27}>
                        <Chev d="M1 6 6 1 11 6" w={12} h={7} stroke="#e0e0e0" />
                        <Chev d="M1 1 6 6 11 1" w={12} h={7} stroke="#e0e0e0" />
                      </BoxBtn>
                      <BoxValue $mono>1 pt</BoxValue>
                      <BoxBtn $w={27}>
                        <Chev d="M1 1 6 6 11 1" w={12} h={7} stroke="#e0e0e0" />
                      </BoxBtn>
                    </ValueBox>
                  </ApRow>
                  <ApRow>
                    <ApSwatch $kind="opacity" />
                    <ApLabel $link>不透明度</ApLabel>
                    <ValueBox>
                      <BoxValue>100%</BoxValue>
                      <BoxBtn $w={27}>
                        <Chev d="M1 1 7 7 1 13" w={8} h={14} stroke="#e0e0e0" />
                      </BoxBtn>
                    </ValueBox>
                  </ApRow>
                  <FxRow>fx<sub>▾</sub></FxRow>
                  <DotsRow $mt={17}><Dot /><Dot /><Dot /></DotsRow>
                </Section>
                <NoSel $quick>快速操作</NoSel>
              </PropsBody>
            </PropsCol>
          </Workspace>
        </Win>
      </Desktop>
      <BelowRow>
        <Article>2021年7月14日 — 在windows11中截取屏幕<em>截图</em>的最简单方法是同时按下键盘上的 Windows +</Article>
        <PageScroll />
      </BelowRow>
      <Taskbar>
        {TaskIcons.map((n, i) => (
          <TaskCell key={i} $active={i === 11}>
            {n}
            {i >= 5 && <RunDot $active={i === 11} />}
          </TaskCell>
        ))}
        <Tray>
          <TrayIcon $ml={0}>
            <svg width="18" height="10" viewBox="0 0 18 10" fill="none" stroke="#1a1a1a" strokeWidth="1.300"><path d="M0.500 9.500 9 1 17.500 9.500" /></svg>
          </TrayIcon>
          <Lang>英</Lang>
          <TrayIcon $ml={25}>
            <svg width="24" height="24" viewBox="0 0 24 24" fill="none" stroke="#1a1a1a" strokeWidth="1.300">
              <path d="M15 1H3a2 2 0 0 0-2 2V16a2 2 0 0 0 2 2H17M7 18V22M13 18V22M4 22H17" />
              <rect x="17" y="1" width="5" height="8" rx="2" />
              <path d="M19.500 9V24" />
            </svg>
          </TrayIcon>
          <TrayIcon $ml={12}>
            <svg width="23" height="18" viewBox="0 0 23 18" fill="none" stroke="#1a1a1a" strokeWidth="1.300">
              <path d="M1 6H5L11 1V17L5 12H1Z" />
              <path d="M15 6 22 13M22 6 15 13" />
            </svg>
          </TrayIcon>
          <TrayIcon $ml={13}>
            <svg width="24" height="20" viewBox="0 0 24 20" fill="#1a1a1a">
              <path d="M0 4H7V8C7 10 5 11 4 11V19H3V11C1 11 0 10 0 8ZM1 0H2V4H1ZM5 0H6V4H5Z" />
              <path fill="none" stroke="#1a1a1a" strokeWidth="1.300" d="M6 5H21V17H6" />
              <rect x="8" y="7" width="11" height="8" />
              <rect x="21" y="9" width="3" height="4" />
            </svg>
          </TrayIcon>
          <Clock>13:13<br />2022/2/20</Clock>
          <Badge>3</Badge>
        </Tray>
      </Taskbar>
      <Menu>
        {ITEMS.map((it, i) =>
          it === "sep" ? (
            <Sep key={i} />
          ) : (
            <Row key={i} $sel={it.sel} $off={it.off}>
              <span>{it.l}</span>
              {it.s && <Shortcut>{it.s}</Shortcut>}
              {it.arrow && (
                <RowArrow width="7" height="12" viewBox="0 0 7 12" fill="none" stroke="#333" strokeWidth="1.200">
                  <path d="M1 1 6 6 1 11" />
                </RowArrow>
              )}
            </Row>
          )
        )}
      </Menu>
    </Root>
  );
}
